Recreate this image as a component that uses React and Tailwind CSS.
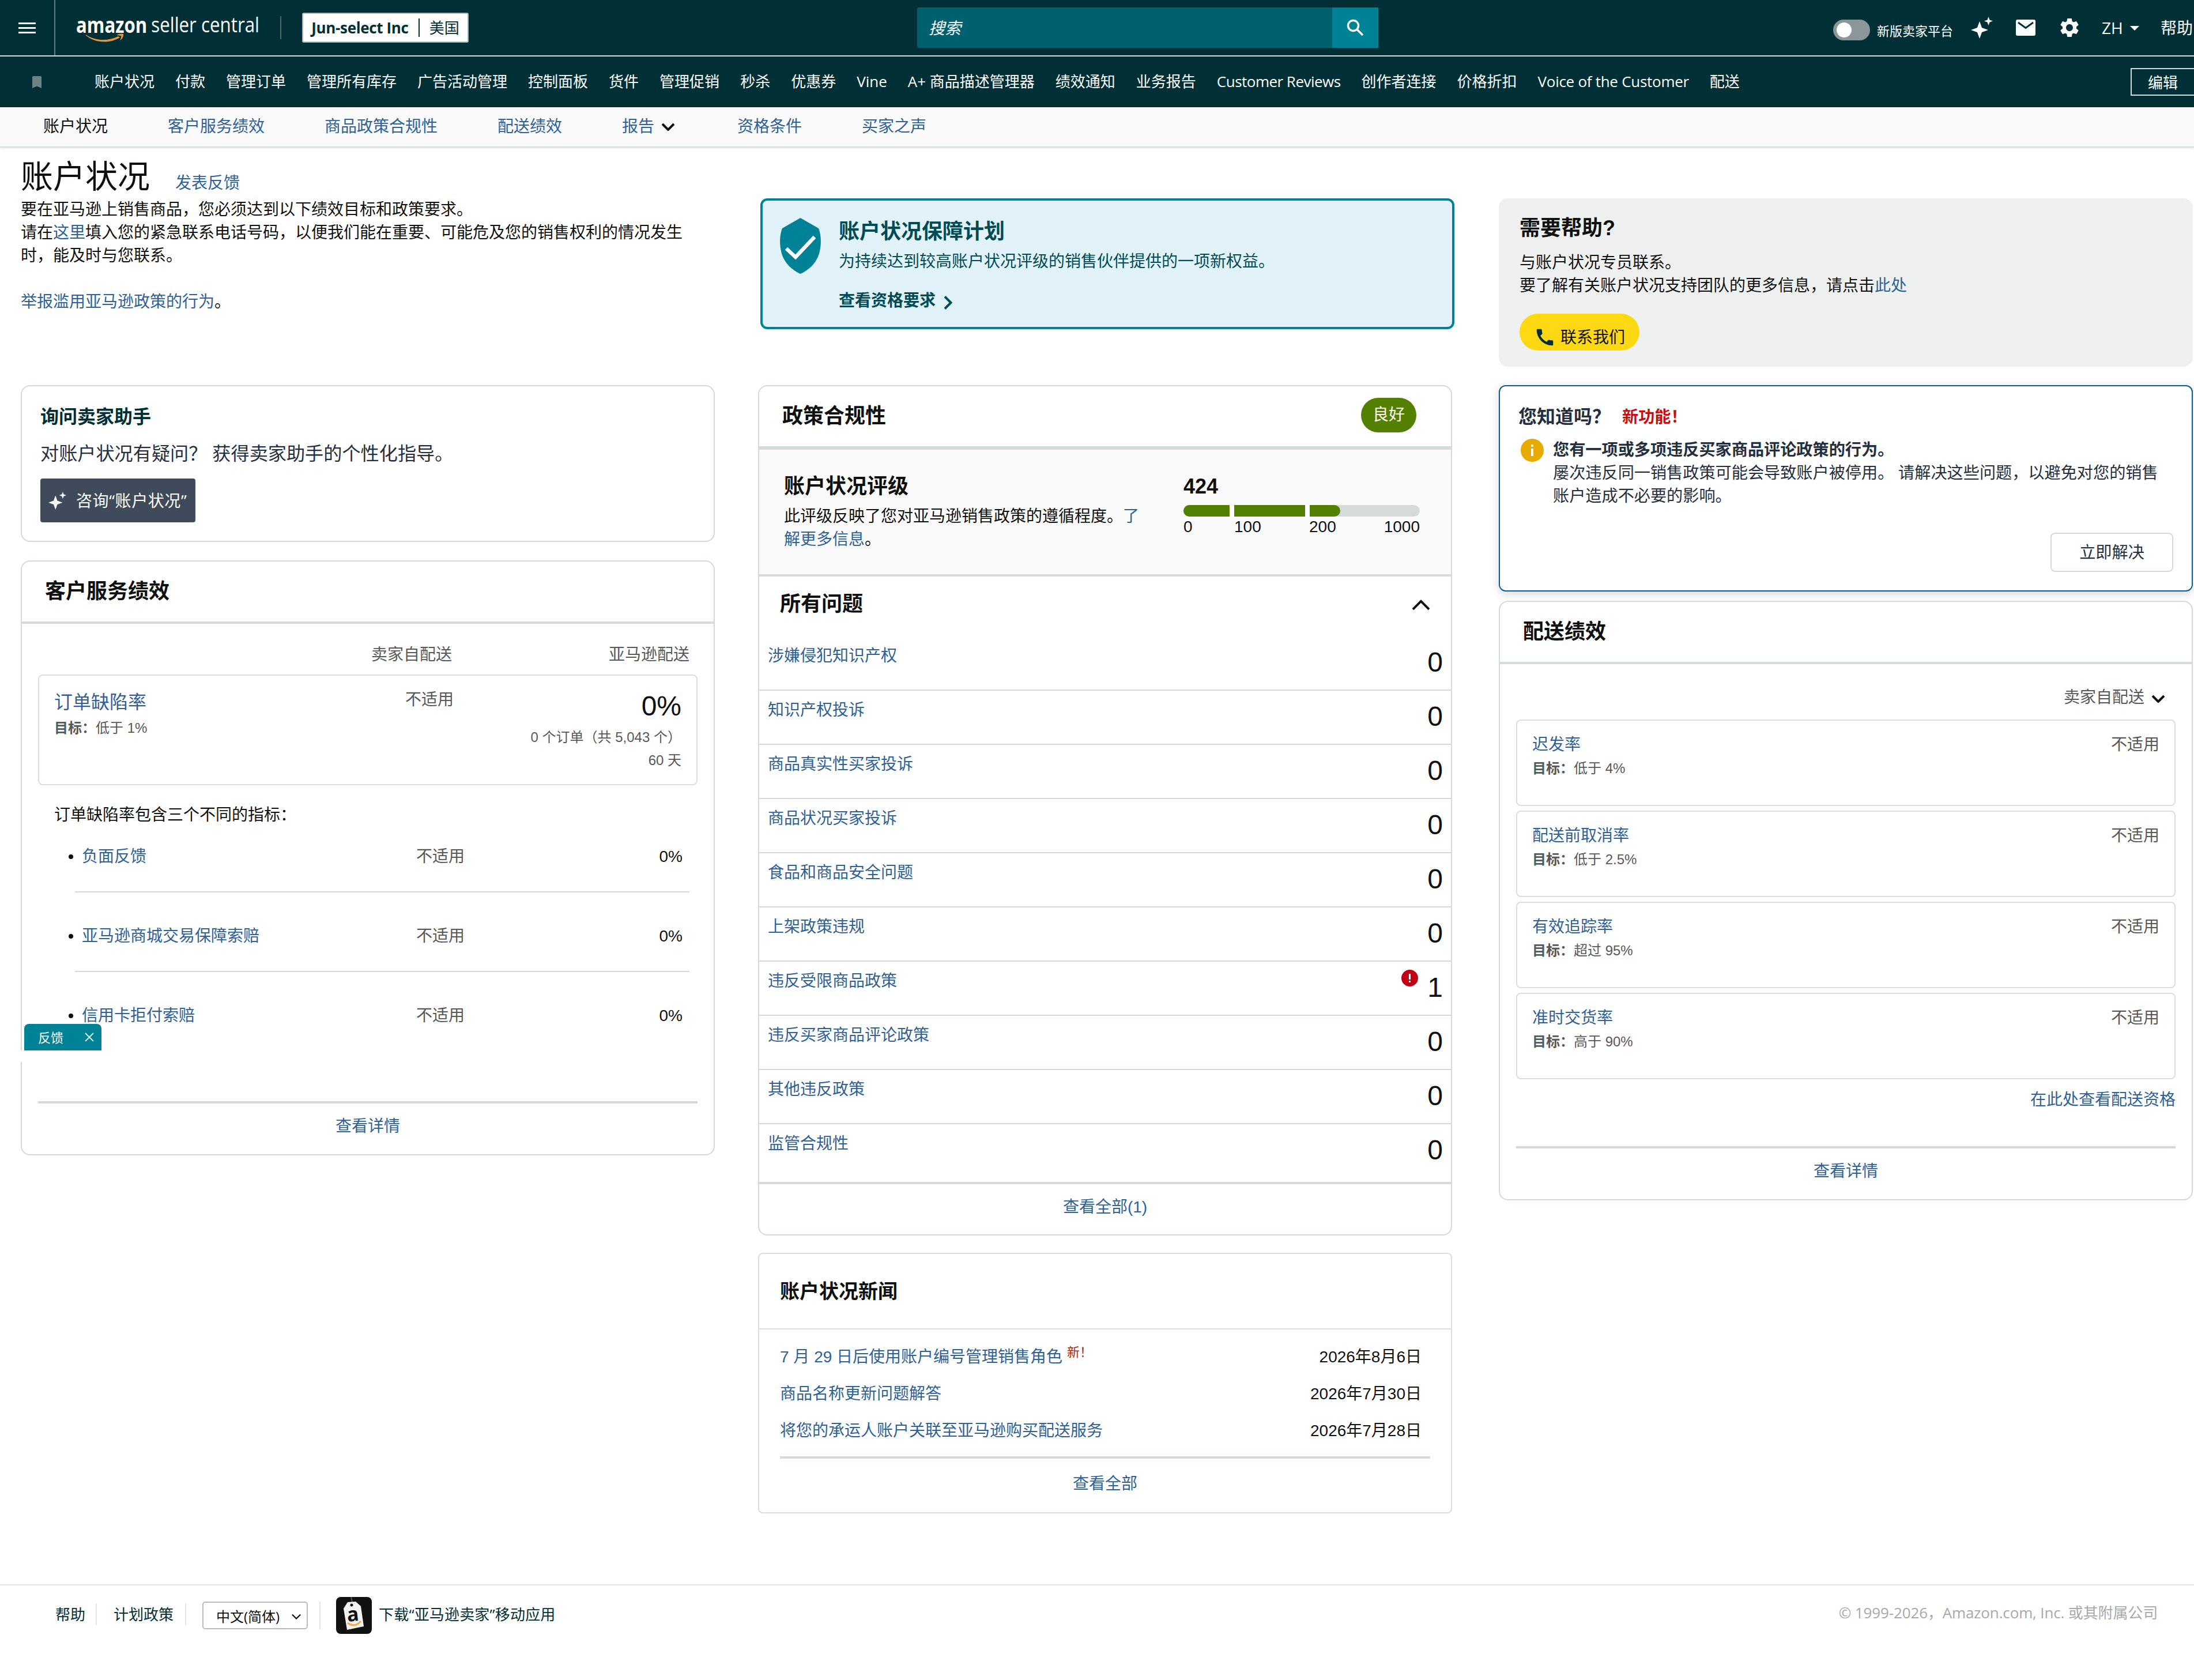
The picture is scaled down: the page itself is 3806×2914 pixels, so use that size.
import React from 'react';

const navItems = [
  { label: '账户状况' },
  { label: '付款' },
  { label: '管理订单' },
  { label: '管理所有库存' },
  { label: '广告活动管理' },
  { label: '控制面板' },
  { label: '货件' },
  { label: '管理促销' },
  { label: '秒杀' },
  { label: '优惠券' },
  { label: 'Vine' },
  { label: 'A+ 商品描述管理器' },
  { label: '绩效通知' },
  { label: '业务报告' },
  { label: 'Customer Reviews', tracking: 'tracking-[-0.520px]' },
  { label: '创作者连接' },
  { label: '价格折扣' },
  { label: 'Voice of the Customer', tracking: 'tracking-[-0.280px]' },
  { label: '配送' },
];

const issues = [
  { name: '涉嫌侵犯知识产权', count: 0 },
  { name: '知识产权投诉', count: 0 },
  { name: '商品真实性买家投诉', count: 0 },
  { name: '商品状况买家投诉', count: 0 },
  { name: '食品和商品安全问题', count: 0 },
  { name: '上架政策违规', count: 0 },
  { name: '违反受限商品政策', count: 1, alert: true },
  { name: '违反买家商品评论政策', count: 0 },
  { name: '其他违反政策', count: 0 },
  { name: '监管合规性', count: 0 },
];

const news = [
  { title: '7 月 29 日后使用账户编号管理销售角色', date: '2026年8月6日', isNew: true },
  { title: '商品名称更新问题解答', date: '2026年7月30日' },
  { title: '将您的承运人账户关联至亚马逊购买配送服务', date: '2026年7月28日' },
];

const defectMetrics = ['负面反馈', '亚马逊商城交易保障索赔', '信用卡拒付索赔'];

const shippingMetrics = [
  { name: '迟发率', goal: '低于 4%' },
  { name: '配送前取消率', goal: '低于 2.5%' },
  { name: '有效追踪率', goal: '超过 95%' },
  { name: '准时交货率', goal: '高于 90%' },
];

const Link = ({ children, className = '' }) => (
  <a href="#" className={`text-[#2e6197] ${className}`}>{children}</a>
);

const Sparkles = ({ className }) => (
  <svg className={className} viewBox="0 0 38 38" fill="currentColor">
    <path d="M15 8 L19 19 L30 23 L19 27 L15 38 L11 27 L0 23 L11 19 Z" />
    <path d="M30.500 0 L32.500 5.500 L38 7.500 L32.500 9.500 L30.500 15 L28.500 9.500 L23 7.500 L28.500 5.500 Z" />
  </svg>
);

const Chevron = ({ className, d = 'M2 2 L12 12 L22 2', width = 3.5 }) => (
  <svg className={className} viewBox="0 0 24 14" fill="none" stroke="currentColor" strokeWidth={width}>
    <path d={d} />
  </svg>
);

const Logo = () => (
  <svg className="ml-[36px] h-[84px] w-[340px] shrink-0" viewBox="0 -14 340 84">
    <text x="0" y="37" transform="scale(0.82 1)" fill="#fff" fontSize="38" fontWeight="700" fontFamily="'Open Sans'">amazon</text>
    <text x="154" y="36" transform="scale(0.846 1)" fill="#fff" fontSize="37" fontFamily="'Open Sans'">seller central</text>
    <path d="M17 40 C32 51 55 52 73 43 L76 45 C58 56 33 55 17 41.500 Z" fill="#e8963a" />
    <path d="M70 41 C74 38 80 38 82 39 C83 42 80 48 76.500 50 C77 47 79 44 78 42.500 C76 41 73 41.500 70 41 Z" fill="#e8963a" />
  </svg>
);

const TopBar = () => (
  <div className="flex h-[98px] items-center overflow-hidden border-b-2 border-[#d5dbdb] text-white">
    <div className="flex h-full w-[96px] shrink-0 items-center border-r-2 border-[#667c80] pl-[32px]">
      <div className="flex flex-col gap-[5px]">
        <div className="h-[3px] w-[30px] bg-white" />
        <div className="h-[3px] w-[30px] bg-white" />
        <div className="h-[3px] w-[30px] bg-white" />
      </div>
    </div>
    <Logo />
    <div className="ml-[14px] h-[40px] w-[2px] shrink-0 bg-[#4f686c]" />
    <div className="ml-[36px] flex h-[52px] w-[289px] shrink-0 items-center justify-center rounded-[3px] border-2 border-[#aab7b8] bg-white text-[26px] text-[#002f36]">
      <span className="font-bold tracking-[-0.350px]">Jun-select Inc</span>
      <div className="mx-[17px] h-[32px] w-[2px] bg-[#002f36]" />
      <span>美国</span>
    </div>
    <div className="ml-[778px] flex h-[70px] w-[720px] shrink-0 items-center rounded-l-[3px] bg-[#00606e] pl-[20px] text-[28px] italic">搜索</div>
    <div className="flex h-[70px] w-[80px] shrink-0 items-center justify-center bg-[#008296]">
      <svg className="h-[30px] w-[30px]" viewBox="0 0 30 30" fill="none" stroke="#fff" strokeWidth="3.500">
        <circle cx="11.500" cy="11.500" r="9" />
        <path d="M18 18 L28 28" />
      </svg>
    </div>
    <div className="mt-[8px] ml-[789px] flex h-[36px] w-[64px] shrink-0 items-center rounded-full bg-[#8a9697] pl-[6px]">
      <div className="h-[26px] w-[26px] rounded-full bg-white" />
    </div>
    <span className="mt-[11px] ml-[12px] shrink-0 text-[22px]">新版卖家平台</span>
    <Sparkles className="ml-[31px] h-[38px] w-[38px] shrink-0" />
    <svg className="ml-[40px] h-[28px] w-[34px] shrink-0" viewBox="0 0 34 28">
      <rect width="34" height="28" rx="3" fill="#fff" />
      <path d="M4 5 L17 14.500 L30 5" fill="none" stroke="#002f36" strokeWidth="3" />
    </svg>
    <svg className="ml-[39px] h-[40px] w-[40px] shrink-0" viewBox="0 0 24 24" fill="#fff">
      <path d="M19.140 12.940c.040-.300.060-.610.060-.940 0-.320-.020-.640-.070-.940l2.030-1.580c.180-.140.230-.410.120-.610l-1.920-3.320c-.120-.220-.370-.290-.590-.220l-2.390.960c-.500-.380-1.030-.700-1.620-.940l-.360-2.540c-.040-.240-.240-.410-.480-.410h-3.840c-.240 0-.430.170-.470.410l-.360 2.540c-.590.240-1.130.570-1.620.940l-2.390-.960c-.220-.080-.470 0-.590.220L2.740 8.870c-.120.210-.080.470.120.610l2.030 1.580c-.050.300-.090.630-.090.940s.020.640.070.940l-2.030 1.580c-.180.140-.230.410-.120.610l1.920 3.320c.120.220.370.290.590.220l2.390-.960c.500.380 1.030.700 1.620.940l.360 2.540c.050.240.240.410.480.410h3.840c.240 0 .440-.170.470-.410l.360-2.540c.590-.240 1.130-.560 1.620-.940l2.390.960c.220.080.470 0 .590-.220l1.920-3.320c.120-.220.070-.470-.120-.610l-2.010-1.580zM12 15.600c-1.980 0-3.600-1.620-3.600-3.600s1.620-3.600 3.600-3.600 3.600 1.620 3.600 3.600-1.620 3.600-3.600 3.600z" />
    </svg>
    <div className="ml-[36px] flex w-[102px] shrink-0 items-center text-[28px]">
      ZH
      <svg className="mt-[2px] ml-[12px] h-[8px] w-[16px] shrink-0" viewBox="0 0 16 8"><path d="M0 0 H16 L8 8 Z" fill="#fff" /></svg>
    </div>
    <span className="shrink-0 text-[28px]">帮助</span>
  </div>
);

const FavoritesBar = () => (
  <div className="flex h-[88px] items-center overflow-hidden text-[26px] text-white">
    <svg className="ml-[56px] h-[21px] w-[16px] shrink-0" viewBox="0 0 16 21"><path d="M0 1.500 Q0 0 1.500 0 H14.500 Q16 0 16 1.500 V21 L8 17.500 L0 21 Z" fill="#6b8386" /></svg>
    <nav className="ml-[92px] flex w-[3532px] shrink-0 gap-[36px] pb-[2px]">
      {navItems.map((item) => (
        <a key={item.label} href="#" className={`whitespace-nowrap ${item.tracking || ''}`}>{item.label}</a>
      ))}
    </nav>
    <div className="flex h-[48px] w-[116px] shrink-0 items-center border-2 border-[#d5dbdb] pt-[2px] pl-[28px]">编辑</div>
  </div>
);

const SubNav = () => (
  <div className="flex h-[70px] gap-[104px] border-b-2 border-[#d9dcdc] bg-[#fafafa] pl-[75px] text-[28px] leading-[68px] shadow-[0_2px_3px_rgba(0,0,0,0.08)]">
    <span className="text-[#0f1111]">账户状况</span>
    <Link>客户服务绩效</Link>
    <Link>商品政策合规性</Link>
    <Link>配送绩效</Link>
    <span className="flex w-[96px] items-center">
      <Link>报告</Link>
      <Chevron className="ml-[12px] h-[14px] w-[24px] text-[#0f1111]" width={4} />
    </span>
    <Link>资格条件</Link>
    <Link>买家之声</Link>
  </div>
);

const Intro = () => (
  <div className="h-[412px] pt-[21px]">
    <div className="flex h-[67px]">
      <h1 className="text-[56px] leading-[60px]">账户状况</h1>
      <Link className="mt-[21px] ml-[44px] leading-[40px]">发表反馈</Link>
    </div>
    <p className="leading-[40px]">
      要在亚马逊上销售商品，您必须达到以下绩效目标和政策要求。<br />
      请在<Link>这里</Link>填入您的紧急联系电话号码，以便我们能在重要、可能危及您的销售权利的情况发生<br />
      时，能及时与您联系。
    </p>
    <p className="mt-[40px] leading-[40px]"><Link>举报滥用亚马逊政策的行为</Link>。</p>
  </div>
);

const AskAssistant = () => (
  <div className="h-[272px] rounded-[16px] border-2 border-[#d5d9d9] pt-[33px] pl-[32px] text-[32px] leading-[40px]">
    <h2 className="font-bold text-[#002f36]">询问卖家助手</h2>
    <p className="mt-[24px] text-[32.160px] text-[#232f3e]">对账户状况有疑问？ 获得卖家助手的个性化指导。</p>
    <button className="mt-[23px] flex h-[76px] w-[269px] items-center rounded-[4px] bg-[#3f4b5a] pl-[14px] font-['Open_Sans','Noto_Sans_CJK_SC',sans-serif] text-[28px] text-white">
      <Sparkles className="h-[31px] w-[31px]" />
      <span className="ml-[17px] tracking-[0.600px] whitespace-nowrap">咨询“账户状况”</span>
    </button>
  </div>
);

const CustomerService = () => (
  <div className="mt-[32px] h-[1032px] rounded-[16px] border-2 border-[#d5d9d9] leading-[40px]">
    <h2 className="flex h-[108px] items-center border-b-4 border-[#d5dbdb] pl-[40px] text-[36px] font-bold">客户服务绩效</h2>
    <div className="px-[28px]">
      <div className="mt-[34px] flex justify-end gap-[272px] pr-[14px] text-[#565959]">
        <span>卖家自配送</span>
        <span>亚马逊配送</span>
      </div>
      <div className="mt-[14px] flex h-[192px] rounded-[8px] border-2 border-[#ddd] pr-[26px] pl-[26px] text-[#565959]">
        <div className="w-[609px] pt-[26px]">
          <Link className="block text-[32px]">订单缺陷率</Link>
          <p className="mt-[5px] text-[24px]"><b>目标：</b>低于 1%</p>
        </div>
        <div className="w-[84px] pt-[22px]">不适用</div>
        <div className="flex-1 pt-[23px] text-right text-[24px]">
          <p className="text-[48px] leading-[60px] text-[#0f1111]">0%</p>
          <p className="mt-[4px]">0 个订单（共 5,043 个）</p>
          <p>60 天</p>
        </div>
      </div>
      <p className="mt-[32px] pl-[28px]">订单缺陷率包含三个不同的指标：</p>
      <ul className="mt-[32px] pr-[14px] pl-[53px]">
        {defectMetrics.map((name, i) => (
          <li key={name}>
            <div className="flex items-center pr-[12px]">
              <span className="h-[8px] w-[8px] rounded-full bg-[#0f1111]" />
              <Link className="ml-[15px] w-[580px]">{name}</Link>
              <span className="text-[#565959]">不适用</span>
              <span className="ml-auto">0%</span>
            </div>
            {i < defectMetrics.length - 1 && <div className="mt-[40px] mb-[56px] ml-[11px] h-[2px] bg-[#d5d9d9]" />}
          </li>
        ))}
      </ul>
      <div className="mt-[128px] border-t-4 border-[#d5d9d9] pt-[20px] text-center"><Link>查看详情</Link></div>
    </div>
  </div>
);

const AssuranceBanner = () => (
  <div className="h-[412px] pt-[88px] pl-[4px]">
    <div className="flex h-[227px] w-[1204px] rounded-[12px] border-4 border-[#008296] bg-[#e1f3f8] text-[#004b56]">
      <svg className="mt-[30px] ml-[29px] h-[97px] w-[73px] shrink-0" viewBox="0 0 73 97">
        <path d="M36.500 0 L68 18 C73 30 73 48 69 62 C64 78 52 90 36.500 97 C21 90 9 78 4 62 C0 48 0 30 5 18 Z" fill="#008296" />
        <path d="M12 53 L28 68 L61 33" fill="none" stroke="#fff" strokeWidth="6.500" />
      </svg>
      <div className="ml-[30px] leading-[40px]">
        <h2 className="mt-[34px] text-[36px] font-bold">账户状况保障计划</h2>
        <p className="mt-[12px]">为持续达到较高账户状况评级的销售伙伴提供的一项新权益。</p>
        <p className="mt-[28px] flex items-center font-bold">
          查看资格要求
          <svg className="mt-[5px] ml-[14px] h-[24px] w-[16px]" viewBox="0 0 16 24" fill="none" stroke="currentColor" strokeWidth="4"><path d="M2 1.500 L12.500 12 L2 22.500" /></svg>
        </p>
      </div>
    </div>
  </div>
);

const PolicyCompliance = () => (
  <div className="h-[1475px] rounded-[16px] border-2 border-[#d5d9d9] leading-[40px]">
    <div className="flex h-[110px] items-center justify-between border-b-6 border-[#d5dbdb] pr-[60px] pb-[4px] pl-[40px]">
      <h2 className="pt-[4px] text-[36px] font-bold">政策合规性</h2>
      <span className="h-[60px] w-[96px] rounded-full bg-[#538000] text-center leading-[59px] text-white">良好</span>
    </div>
    <div className="flex h-[220px] border-b-4 border-[#d5dbdb] bg-[#fafafa] pt-[39px] pl-[43px]">
      <div className="w-[693px]">
        <h3 className="text-[36px] leading-[50px] font-bold">账户状况评级</h3>
        <p className="mt-[7px]">此评级反映了您对亚马逊销售政策的遵循程度。<Link>了<br />解更多信息</Link>。</p>
      </div>
      <div className="w-[410px]">
        <p className="text-[36px] leading-[50px] font-bold">424</p>
        <div className="mt-[7px] flex h-[20px] overflow-hidden rounded-full bg-[#d5dbdb]">
          <div className="w-[80px] bg-[#538000]" />
          <div className="w-[8px] bg-white" />
          <div className="w-[123px] bg-[#538000]" />
          <div className="w-[8px] bg-white" />
          <div className="w-[53px] rounded-r-full bg-[#538000]" />
        </div>
        <div className="mt-[2px] flex leading-[32px]">
          <span className="w-[88px]">0</span>
          <span className="w-[130px]">100</span>
          <span>200</span>
          <span className="ml-auto">1000</span>
        </div>
      </div>
    </div>
    <div className="flex h-[104px] items-center justify-between px-[36px] pb-[9px]">
      <h3 className="text-[36px] font-bold">所有问题</h3>
      <Chevron className="mt-[3px] h-[19px] w-[32px]" d="M1.500 12.500 L12 2 L22.500 12.500" width={3} />
    </div>
    {issues.map((issue) => (
      <div key={issue.name} className="flex h-[94px] border-b-2 border-[#d5d9d9] pr-[14px] pl-[15px] last-of-type:border-0">
        <Link className="mt-[14px]">{issue.name}</Link>
        {issue.alert && (
          <svg className="mt-[14px] mr-[16px] ml-auto h-[29px] w-[29px]" viewBox="0 0 29 29">
            <circle cx="14.500" cy="14.500" r="14.500" fill="#c10015" />
            <rect x="13" y="7" width="3" height="10" fill="#fff" />
            <rect x="13" y="19" width="3" height="3" fill="#fff" />
          </svg>
        )}
        <span className={issue.alert ? 'pt-[15px] text-[48px] leading-[60px]' : 'ml-auto pt-[15px] text-[48px] leading-[60px]'}>{issue.count}</span>
      </div>
    ))}
    <p className="mt-[6px] border-t-4 border-[#d5d9d9] pt-[20px] text-center"><Link>查看全部(1)</Link></p>
  </div>
);

const News = () => (
  <div className="mt-[30px] h-[452px] rounded-[8px] border-2 border-[#ddd]">
    <h2 className="h-[131px] border-b-2 border-[#ddd] pl-[36px] text-[34px] leading-[130px] font-bold">账户状况新闻</h2>
    <div className="px-[36px] pt-[16px]">
      {news.map((item) => (
        <div key={item.title} className="flex justify-between pr-[15px] leading-[64px]">
          <div className="flex">
            <Link>{item.title}</Link>
            {item.isNew && <span className="ml-[8px] text-[22px] leading-[48px] text-[#b12704]">新！</span>}
          </div>
          <span>{item.date}</span>
        </div>
      ))}
      <p className="mt-[12px] border-t-4 border-[#d5d9d9] pt-[24px] text-center leading-[40px]"><Link>查看全部</Link></p>
    </div>
  </div>
);

const HelpCard = () => (
  <div className="h-[412px] pt-[88px]">
    <div className="h-[292px] rounded-[16px] bg-[#eff1f0] pt-[27px] pl-[36px] leading-[40px]">
      <h2 className="text-[36px] leading-[50px] font-bold">需要帮助?</h2>
      <p className="mt-[15px]">与账户状况专员联系。<br />要了解有关账户状况支持团队的更多信息，请点击<Link>此处</Link></p>
      <button className="mt-[28px] flex h-[64px] w-[208px] items-center rounded-full bg-[#ffd814] pt-[18px] pl-[25px]">
        <svg className="h-[38px] w-[38px]" viewBox="0 0 24 24" fill="#002f36">
          <path d="M20.010 15.380c-1.230 0-2.420-.200-3.530-.560-.350-.120-.740-.030-1.010.240l-1.570 1.970c-2.830-1.350-5.480-3.900-6.890-6.830l1.950-1.660c.270-.280.350-.670.240-1.020-.370-1.110-.560-2.300-.560-3.530 0-.540-.450-.990-.990-.990H4.190C3.650 3 3 3.240 3 3.990 3 13.280 10.730 21 20.010 21c.710 0 .990-.630.990-1.180v-3.450c0-.540-.450-.990-.990-.990z" />
        </svg>
        <span className="ml-[8px] pt-[2px]">联系我们</span>
      </button>
    </div>
  </div>
);

const DidYouKnow = () => (
  <div className="h-[358px] rounded-[12px] border-2 border-[#0a5a9c] pt-[32px] pr-[32px] pl-[32px] text-[28.160px] leading-[40px] text-[#232f3e] shadow-[0_4px_16px_rgba(0,0,0,0.16)]">
    <div className="flex items-center">
      <h2 className="text-[32px] font-bold">您知道吗？</h2>
      <span className="ml-[20px] pt-[2px] font-bold text-[#cc0c0c]">新功能！</span>
    </div>
    <div className="mt-[17px] flex">
      <svg className="ml-[4px] h-[40px] w-[40px] shrink-0" viewBox="0 0 40 40">
        <circle cx="20" cy="20" r="20" fill="#e7ab00" />
        <rect x="18" y="10" width="4" height="4" fill="#fff" />
        <rect x="18" y="17" width="4" height="13" fill="#fff" />
      </svg>
      <p className="ml-[16px] whitespace-nowrap">
        <b>您有一项或多项违反买家商品评论政策的行为。</b><br />
        屡次违反同一销售政策可能会导致账户被停用。 请解决这些问题，以避免对您的销售<br />
        账户造成不必要的影响。
      </p>
    </div>
    <button className="mt-[43px] ml-auto block h-[68px] w-[213px] rounded-[8px] border-2 border-[#d5d9d9] pt-[1px]">立即解决</button>
  </div>
);

const Shipping = () => (
  <div className="mt-[16px] h-[1040px] rounded-[16px] border-2 border-[#d5d9d9] bg-white leading-[40px]">
    <h2 className="flex h-[108px] items-center border-b-4 border-[#d5dbdb] pl-[40px] text-[36px] font-bold">配送绩效</h2>
    <div className="px-[28px]">
      <div className="mt-[38px] flex items-center justify-end pr-[18px] text-[#565959]">
        卖家自配送
        <Chevron className="mt-[4px] ml-[12px] h-[14px] w-[24px] text-[#0f1111]" width={4} />
      </div>
      <div className="mt-[18px] flex flex-col gap-[8px]">
        {shippingMetrics.map((m) => (
          <div key={m.name} className="flex h-[150px] justify-between rounded-[8px] border-2 border-[#ddd] px-[26px] pt-[22px] text-[#565959]">
            <div>
              <Link className="block">{m.name}</Link>
              <p className="mt-[1px] text-[24px]"><b>目标：</b>{m.goal}</p>
            </div>
            <span>不适用</span>
          </div>
        ))}
      </div>
      <p className="mt-[16px] text-right"><Link>在此处查看配送资格</Link></p>
      <p className="mt-[60px] border-t-4 border-[#d5d9d9] pt-[20px] text-center"><Link>查看详情</Link></p>
    </div>
  </div>
);

const Footer = () => (
  <footer className="flex h-[102px] items-center border-t-2 border-[#e3e6e6] pr-[63px] font-['Open_Sans','Noto_Sans_CJK_SC',sans-serif] text-[26px] text-[#002f36]">
    <span className="ml-[96px]">帮助</span>
    <div className="ml-[18px] h-[38px] w-[2px] bg-[#e3e6e6]" />
    <span className="ml-[29px]">计划政策</span>
    <div className="ml-[20px] h-[38px] w-[2px] bg-[#e3e6e6]" />
    <div className="mt-[4px] ml-[28px] flex h-[48px] w-[183px] items-center rounded-[5px] border-2 border-[#bbb] pt-[4px] pl-[22px] text-[24px] text-[#0f1111]">
      中文(简体)
      <Chevron className="ml-[20px] h-[10px] w-[18px]" width={3} />
    </div>
    <div className="mt-[4px] ml-[20px] h-[48px] w-[2px] bg-[#e3e6e6]" />
    <svg className="mt-[4px] ml-[27px] h-[64px] w-[62px]" viewBox="0 0 62 64">
      <rect width="62" height="64" rx="8" fill="#111" />
      <path d="M26 0 L28 9" stroke="#555" strokeWidth="2" />
      <path d="M20 9 L34 8 L43 16 L48 51 L19 57 L13 20 Z" fill="#f2f2f2" />
      <circle cx="27" cy="14" r="2.500" fill="#111" />
      <text x="19" y="42" fontSize="34" fontWeight="700" fontFamily="'Open Sans'" fill="#111" transform="rotate(-6 30 34)">a</text>
      <path d="M20 45 Q32 54 43 42" fill="none" stroke="#f5a742" strokeWidth="3" />
    </svg>
    <span className="ml-[12px] tracking-[0.180px]">下载“亚马逊卖家”移动应用</span>
    <span className="ml-auto pb-[6px] tracking-[-0.140px] text-[#a6a9a9]">© 1999-2026，Amazon.com, Inc. 或其附属公司</span>
  </footer>
);

export default function App() {
  return (
    <div className="relative h-[2914px] w-[3806px] overflow-hidden bg-white font-['Liberation_Sans','Noto_Sans_CJK_SC',sans-serif] text-[28px] text-[#0f1111]">
      <header className="bg-[#002f36] font-['Open_Sans','Noto_Sans_CJK_SC',sans-serif]">
        <TopBar />
        <FavoritesBar />
      </header>
      <SubNav />
      <main className="flex h-[2492px] pl-[36px]">
        <div className="w-[1204px] shrink-0">
          <Intro />
          <AskAssistant />
          <CustomerService />
        </div>
        <div className="ml-[75px] w-[1204px] shrink-0">
          <AssuranceBanner />
          <PolicyCompliance />
          <News />
        </div>
        <div className="ml-[81px] w-[1204px] shrink-0">
          <HelpCard />
          <DidYouKnow />
          <Shipping />
        </div>
      </main>
      <Footer />

      {/* floating feedback tab */}
      <div className="absolute top-[1776px] left-[30px] h-[66px]">
        <div className="ml-[12px] flex h-[46px] w-[134px] items-center rounded-t-[8px] bg-[#008296] pl-[24px] font-['Open_Sans','Noto_Sans_CJK_SC',sans-serif] text-[22px] text-white">
          反馈
          <svg className="ml-[37px] h-[16px] w-[16px]" viewBox="0 0 16 16" stroke="#d9eef1" strokeWidth="2"><path d="M1 1 L15 15 M15 1 L1 15" /></svg>
        </div>
        <div className="h-[20px] w-[20px] bg-white" />
      </div>
    </div>
  );
}
